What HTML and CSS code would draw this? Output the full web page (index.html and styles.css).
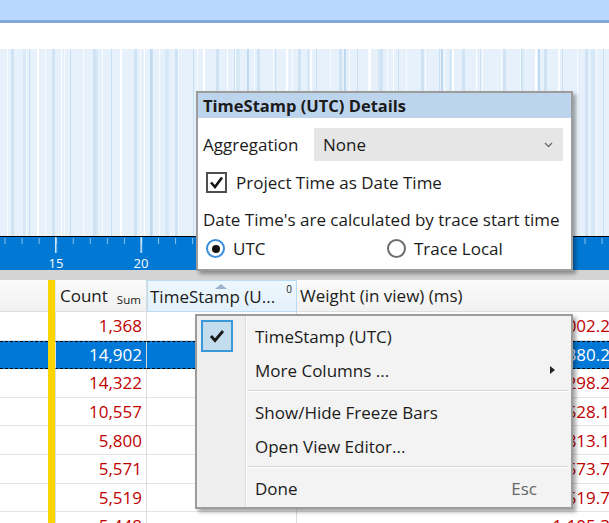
FILE: index.html
```html
<!DOCTYPE html>
<html lang="en">
<head>
<meta charset="utf-8">
<title>TimeStamp details</title>
<link rel="stylesheet" href="styles.css">
</head>
<body>
<div class="app">
  <div class="titlebar"></div>
  <div class="gap"></div>
  <div class="heatmap"></div>
  <div class="axis">
    <svg class="ruler" width="609" height="33" viewBox="0 0 609 33">
      <defs>
        <pattern id="minor" x="4.5" y="0" width="17.06" height="33" patternUnits="userSpaceOnUse">
          <rect x="0" y="1" width="1" height="6" fill="#8fc2ee"/>
        </pattern>
        <pattern id="major" x="55.2" y="0" width="85.3" height="33" patternUnits="userSpaceOnUse">
          <rect x="0" y="0" width="1.3" height="16" fill="#ffffff"/>
        </pattern>
      </defs>
      <rect width="609" height="33" fill="url(#minor)"/>
      <rect width="609" height="33" fill="url(#major)"/>
      <text class="tick-label" x="56" y="31">15</text>
      <text class="tick-label" x="141" y="31">20</text>
    </svg>
  </div>
  <div class="splitter"></div>

  <div class="table">
    <div class="row head">
      <div class="cell c0"></div>
      <div class="cell freeze"></div>
      <div class="cell count">Count <span class="agg">Sum</span></div>
      <div class="cell ts"><span class="sort"></span>TimeStamp (U...<span class="ord">0</span></div>
      <div class="cell weight">Weight (in view) (ms)</div>
    </div>
    <div class="row"><div class="cell c0"></div><div class="cell freeze"></div><div class="cell count">1,368</div><div class="cell ts"></div><div class="cell weight">1,002.2</div></div>
    <div class="row selected"><div class="cell c0"></div><div class="cell freeze"></div><div class="cell count">14,902</div><div class="cell ts"></div><div class="cell weight">4,380.2</div></div>
    <div class="row"><div class="cell c0"></div><div class="cell freeze"></div><div class="cell count">14,322</div><div class="cell ts"></div><div class="cell weight">4,298.2</div></div>
    <div class="row"><div class="cell c0"></div><div class="cell freeze"></div><div class="cell count">10,557</div><div class="cell ts"></div><div class="cell weight">3,528.1</div></div>
    <div class="row"><div class="cell c0"></div><div class="cell freeze"></div><div class="cell count">5,800</div><div class="cell ts"></div><div class="cell weight">1,813.1</div></div>
    <div class="row"><div class="cell c0"></div><div class="cell freeze"></div><div class="cell count">5,571</div><div class="cell ts"></div><div class="cell weight">1,573.7</div></div>
    <div class="row"><div class="cell c0"></div><div class="cell freeze"></div><div class="cell count">5,519</div><div class="cell ts"></div><div class="cell weight">1,519.7</div></div>
    <div class="row"><div class="cell c0"></div><div class="cell freeze"></div><div class="cell count">5,448</div><div class="cell ts"></div><div class="cell weight">1,105.3</div></div>
  </div>

  <div class="details">
    <div class="details-title">TimeStamp (UTC) Details</div>
    <div class="details-body">
      <div class="agg-row">
        <span class="agg-label">Aggregation</span>
        <div class="dropdown">
          <span>None</span>
          <svg class="chev" width="9" height="6" viewBox="0 0 9 6"><polyline points="1,1 4.5,4.5 8,1" fill="none" stroke="#6a6a6a" stroke-width="1.3"/></svg>
        </div>
      </div>
      <div class="check-row">
        <span class="checkbox">
          <svg width="17" height="17" viewBox="0 0 17 17"><polyline points="3,8.5 7,13 14,3.5" fill="none" stroke="#111" stroke-width="2.6"/></svg>
        </span>
        <span>Project Time as Date Time</span>
      </div>
      <div class="note">Date Time's are calculated by trace start time</div>
      <div class="radio-row">
        <label class="radio-opt"><span class="radio on"></span>UTC</label>
        <label class="radio-opt"><span class="radio"></span>Trace Local</label>
      </div>
    </div>
  </div>

  <div class="menu">
    <div class="item">
      <span class="gutter"><span class="checkmark"><svg width="16" height="14" viewBox="0 0 16 14"><polyline points="2,7 6,11.5 14,2" fill="none" stroke="#1a1a1a" stroke-width="2.8"/></svg></span></span>
      <span class="label">TimeStamp (UTC)</span>
    </div>
    <div class="item">
      <span class="gutter"></span>
      <span class="label">More Columns ...</span>
      <span class="arrow"></span>
    </div>
    <div class="sep"></div>
    <div class="item">
      <span class="gutter"></span>
      <span class="label">Show/Hide Freeze Bars</span>
    </div>
    <div class="item">
      <span class="gutter"></span>
      <span class="label">Open View Editor...</span>
    </div>
    <div class="sep"></div>
    <div class="item">
      <span class="gutter"></span>
      <span class="label">Done</span>
      <span class="shortcut">Esc</span>
    </div>
  </div>
</div>
</body>
</html>
```
FILE: styles.css
```css
html, body {
  margin: 0;
  padding: 0;
}
body {
  width: 609px;
  height: 523px;
  overflow: hidden;
  font-family: "Open Sans", "Noto Sans", sans-serif;
  font-size: 17px;
  color: #1b1b1b;
  background: #fff;
}
.app {
  position: relative;
  width: 609px;
  height: 523px;
  overflow: hidden;
}
.titlebar {
  height: 20px;
  background: #b8d8fd;
  border-bottom: 3px solid #80a8da;
}
.gap {
  height: 26px;
  background: #fff;
}
.heatmap {
  height: 187px;
  background:
    repeating-linear-gradient(90deg, transparent 0 37px, #fff 37px 39px, transparent 39px 61px, #fff 61px 62px, transparent 62px 83px),
    repeating-linear-gradient(90deg, transparent 0 11px, #cfe3f5 11px 14px, transparent 14px 29px, #c9e0f4 29px 30px, transparent 30px 41px),
    repeating-linear-gradient(90deg, transparent 0 53px, #bfd9f1 53px 55px, transparent 55px 97px),
    repeating-linear-gradient(90deg, transparent 0 7px, rgba(255,255,255,.7) 7px 8px, transparent 8px 19px),
    repeating-linear-gradient(90deg, transparent 0 23px, #d7e8f7 23px 27px, transparent 27px 71px),
    #e6f1fb;
}
.axis {
  height: 33px;
  border-top: 1px solid #000;
  background: #0078d4;
}
.ruler {
  display: block;
  overflow: visible;
}
.tick-label {
  fill: #fff;
  font-family: "Open Sans", sans-serif;
  font-size: 13px;
  text-anchor: middle;
}
.splitter {
  height: 10px;
  background: #d4d4d4;
}

/* table */
.table {
  width: 640px;
}
.row {
  display: grid;
  grid-template-columns: 48px 7px 92px 150px 343px;
  height: 28.6px;
}
.cell {
  border-bottom: 1px solid #e4e4e4;
  box-sizing: border-box;
  display: flex;
  align-items: center;
  white-space: nowrap;
  overflow: hidden;
}
.freeze {
  background: #ffd500;
  border-bottom: none;
}
.count {
  border-left: 1px solid #dcdcdc;
  border-right: 1px solid #dcdcdc;
  justify-content: flex-end;
  padding-right: 4px;
  color: #c00000;
}
.ts {
  border-right: 1px solid #dcdcdc;
}
.weight {
  justify-content: flex-end;
  padding-right: 30px;
  color: #c00000;
}
.row.head {
  height: 32px;
}
.head .cell {
  background: linear-gradient(#fbfbfb, #f1f1f1);
  border-bottom: 1px solid #dedede;
  color: #1b1b1b;
}
.head .freeze {
  background: #ffd500;
  border-bottom: none;
}
.head .count {
  justify-content: flex-start;
  padding-left: 4px;
  border-right: 1px solid #dcdcdc;
  border-left-color: #e8e8e8;
}
.agg {
  font-size: 11.5px;
  margin-left: 9px;
  margin-top: 7px;
}
.head .ts {
  position: relative;
  background: linear-gradient(#eef7fd, #e3f1fb);
  border: 1px solid #b9dcf4;
  padding-left: 2px;
}
.head .weight {
  justify-content: flex-start;
  padding-left: 3px;
}
.sort {
  position: absolute;
  left: 67px;
  top: 3px;
  width: 0;
  height: 0;
  border-left: 6px solid transparent;
  border-right: 6px solid transparent;
  border-bottom: 5px solid #9db4cb;
}
.ord {
  position: absolute;
  right: 4px;
  top: 1px;
  font-size: 10px;
}
.row.selected .cell {
  background: #0078d7;
  color: #fff;
  border-top: 1px dashed #000;
  border-bottom: 1px dashed #000;
}
.row.selected .freeze {
  background: #ffd500;
  border: none;
}

/* details popup */
.details {
  position: absolute;
  left: 196px;
  top: 91px;
  width: 373px;
  height: 176px;
  border: 2px solid #9c9c9c;
  background: #fff;
  box-shadow: 3px 3px 4px rgba(0,0,0,.35);
}
.details-title {
  height: 25px;
  line-height: 25px;
  background: #bdd4ed;
  font-weight: bold;
  font-size: 16.5px;
  padding-left: 5px;
}
.details-body {
  padding: 10px 8px 0 5px;
}
.agg-row {
  display: flex;
  align-items: center;
  height: 33px;
}
.agg-label {
  width: 111px;
}
.dropdown {
  flex: 1;
  height: 33px;
  background: #e6e6e6;
  display: flex;
  align-items: center;
  justify-content: space-between;
  padding: 0 10px 0 9px;
}
.check-row {
  display: flex;
  align-items: center;
  margin-top: 11px;
  height: 21px;
  padding-left: 3px;
}
.checkbox {
  width: 17px;
  height: 17px;
  border: 2px solid #4f4f4f;
  margin-right: 9px;
  display: flex;
}
.note {
  margin-top: 16px;
  line-height: 22px;
  white-space: nowrap;
}
.radio-row {
  display: grid;
  grid-template-columns: 181px auto;
  margin-top: 8px;
  padding-left: 3px;
}
.radio-opt {
  display: flex;
  align-items: center;
  height: 19px;
}
.radio {
  width: 15px;
  height: 15px;
  border-radius: 50%;
  border: 2px solid #6c6c6c;
  margin-right: 8px;
  box-sizing: content-box;
  display: flex;
  align-items: center;
  justify-content: center;
}
.radio.on {
  border-color: #3d8ee0;
}
.radio.on::after {
  content: "";
  width: 8px;
  height: 8px;
  border-radius: 50%;
  background: #111;
}

/* context menu */
.menu {
  position: absolute;
  left: 195px;
  top: 314px;
  width: 374px;
  border: 2px solid #9c9c9c;
  padding: 3px 0 2px;
  background:
    linear-gradient(90deg, #efefef 0 48px, #dcdcdc 48px 49px, #fff 49px 50px, #f3f3f3 50px);
  box-shadow: 3px 3px 4px rgba(0,0,0,.35);
}
.item {
  display: flex;
  align-items: center;
  height: 34px;
}
.gutter {
  width: 50px;
  flex: none;
  align-self: stretch;
  display: flex;
  align-items: center;
}
.checkmark {
  width: 28px;
  height: 28px;
  margin-left: 4px;
  background: #c3ddef;
  border: 2px solid #3a9ad9;
  display: flex;
  align-items: center;
  justify-content: center;
}
.label {
  flex: 1;
  padding-left: 8px;
}
.arrow {
  width: 0;
  height: 0;
  border-top: 4px solid transparent;
  border-bottom: 4px solid transparent;
  border-left: 5px solid #222;
  margin-right: 16px;
}
.shortcut {
  color: #666;
  margin-right: 34px;
}
.sep {
  height: 8px;
  margin-left: 50px;
  margin-right: 4px;
  display: flex;
  flex-direction: column;
  justify-content: center;
}
.sep::before {
  content: "";
  display: block;
  border-top: 1px solid #d4d4d4;
  border-bottom: 1px solid #fff;
}
```
